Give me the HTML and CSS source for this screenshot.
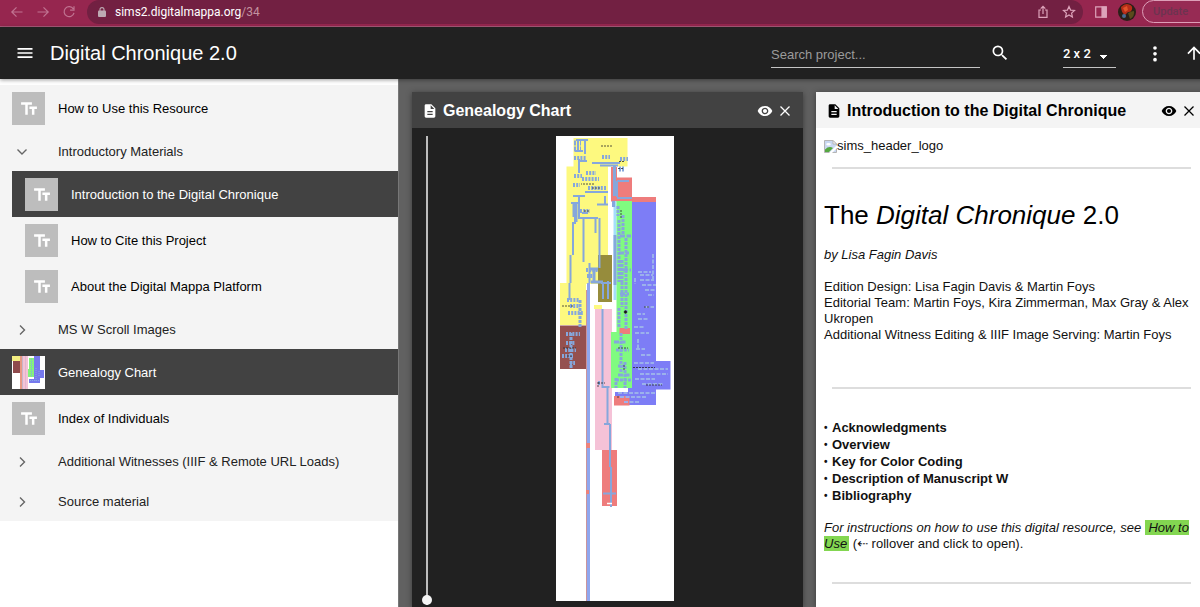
FILE: index.html
```html
<!DOCTYPE html>
<html lang="en">
<head>
<meta charset="utf-8">
<title>Digital Chronique 2.0</title>
<link rel="stylesheet" href="styles.css">
</head>
<body>
<svg class="sprite" aria-hidden="true">
  <symbol id="i-text" viewBox="0 0 24 24"><path d="M2.5 4v3h5v12h3V7h5V4zM21.500 9h-9v3h3v7h3v-7h3z"/></symbol>
  <symbol id="i-doc" viewBox="0 0 24 24"><path d="M14 2H6c-1.100 0-1.990.9-1.990 2L4 20c0 1.100.890 2 1.990 2H18c1.100 0 2-.9 2-2V8zm2 16H8v-2h8v2zm0-4H8v-2h8v2zm-3-5V3.500L18.500 9z"/></symbol>
  <symbol id="i-eye" viewBox="0 0 24 24"><path d="M12 4.500C7 4.500 2.730 7.610 1 12c1.730 4.390 6 7.500 11 7.500s9.270-3.110 11-7.500c-1.730-4.390-6-7.500-11-7.500zM12 17c-2.760 0-5-2.240-5-5s2.240-5 5-5 5 2.240 5 5-2.240 5-5 5zm0-8c-1.660 0-3 1.340-3 3s1.340 3 3 3 3-1.340 3-3-1.340-3-3-3z"/></symbol>
  <symbol id="i-close" viewBox="0 0 16 16"><path d="M3.500 3.500l9 9m0-9l-9 9" fill="none" stroke="currentColor" stroke-width="1.300"/></symbol>
  <symbol id="i-right" viewBox="0 0 16 16"><path d="M6 3.500L10.500 8 6 12.500" fill="none" stroke="currentColor" stroke-width="1.400"/></symbol>
  <symbol id="i-down" viewBox="0 0 16 16"><path d="M3.500 5.500L8 10l4.500-4.500" fill="none" stroke="currentColor" stroke-width="1.400"/></symbol>
</svg>

<div class="browser">
  <nav class="browser-nav" aria-label="Browser">
    <button class="chrome-btn" aria-label="Back"><svg width="14" height="14" viewBox="0 0 14 14"><path d="M12.500 7H2M6.500 2.300L1.800 7l4.700 4.700"/></svg></button>
    <button class="chrome-btn" aria-label="Forward"><svg width="14" height="14" viewBox="0 0 14 14"><path d="M1.500 7H12M7.500 2.300L12.200 7l-4.700 4.700"/></svg></button>
    <button class="chrome-btn" aria-label="Reload"><svg width="14" height="14" viewBox="0 0 14 14"><path d="M11.300 3.900A5 5 0 1 0 12 7.800M12 1.300v3.900H8.100"/></svg></button>
  </nav>
  <div class="address">
    <svg class="lock" width="8" height="10" viewBox="0 0 8 10"><rect y="3.600" width="8" height="6.400" rx="1"/><path d="M2 4V2.600a2 2 0 0 1 4 0V4" fill="none" stroke="currentColor" stroke-width="1.100"/></svg>
    <span class="url">sims2.digitalmappa.org<span class="url-path">/34</span></span>
    <button class="chrome-btn light" aria-label="Share"><svg width="14" height="14" viewBox="0 0 14 14"><path d="M5 5H3v7.300h8V5H9M7 9V1.500M4.700 3.700L7 1.400l2.300 2.300"/></svg></button>
    <button class="chrome-btn light" aria-label="Bookmark"><svg width="14" height="14" viewBox="0 0 14 14"><path d="M7 1.500l1.600 3.600 3.900.4-2.900 2.600.8 3.900L7 10l-3.400 2 .8-3.900-2.900-2.600 3.900-.4z"/></svg></button>
  </div>
  <button class="chrome-btn light" aria-label="Side panel"><svg width="14" height="14" viewBox="0 0 14 14"><path d="M1.700 1.800h10.600v10.400H1.700z"/><path d="M8 2h4v10H8z" fill="currentColor"/></svg></button>
  <svg class="avatar" width="18" height="18" viewBox="0 0 18 18"><circle cx="9" cy="9" r="9" fill="#2a2018"/><path d="M3 4q4-4 8-2.500 4 1 3 5-1 3-4 2.500L7 12Q3 9 3 4z" fill="#b62d18"/><path d="M5 5l4-2 1 4-3 2z" fill="#e0532a"/><path d="M10 10q4-2 6-2 1 5-4 8z" fill="#5a4b1d"/><circle cx="6" cy="13" r="2" fill="#496b91"/></svg>
  <button class="update">Update</button>
</div>

<header class="appbar">
  <button class="icon-btn" aria-label="Menu"><svg width="20" height="20" viewBox="0 0 24 24"><path d="M3 18h18v-2H3zm0-5h18v-2H3zm0-7v2h18V6z"/></svg></button>
  <h1 class="app-title">Digital Chronique 2.0</h1>
  <form class="search">
    <input class="search-input" type="text" placeholder="Search project..." aria-label="Search project">
    <button class="icon-btn" type="button" aria-label="Search"><svg width="20" height="20" viewBox="0 0 24 24"><path d="M15.500 14h-.790l-.280-.270A6.470 6.470 0 0 0 16 9.500 6.500 6.500 0 1 0 9.500 16c1.610 0 3.090-.590 4.230-1.570l.270.280v.790l5 4.990L20.490 19zm-6 0C7.010 14 5 11.990 5 9.500S7.010 5 9.500 5 14 7.010 14 9.500 11.990 14 9.500 14z"/></svg></button>
  </form>
  <select class="layout-select" aria-label="Layout"><option>2 x 2</option></select>
  <button class="icon-btn" aria-label="More"><svg width="20" height="20" viewBox="0 0 24 24"><circle cx="12" cy="6" r="2.200"/><circle cx="12" cy="13" r="2.200"/><circle cx="12" cy="20" r="2.200"/></svg></button>
  <button class="icon-btn up" aria-label="Up"><svg width="20" height="20" viewBox="0 0 24 24"><path d="M4 12l1.410 1.410L11 7.830V20h2V7.830l5.580 5.590L20 12l-8-8z"/></svg></button>
</header>

<div class="layout">
  <nav class="sidebar" aria-label="Contents">
    <ul class="tree">
      <li><a class="row doc" href="#"><span class="thumb"><svg><use href="#i-text"/></svg></span>How to Use this Resource</a></li>
      <li><button class="row group"><svg class="chev"><use href="#i-down"/></svg>Introductory Materials</button>
        <ul class="subtree">
          <li><a class="row doc selected" href="#"><span class="thumb"><svg><use href="#i-text"/></svg></span>Introduction to the Digital Chronique</a></li>
          <li><a class="row doc" href="#"><span class="thumb"><svg><use href="#i-text"/></svg></span>How to Cite this Project</a></li>
          <li><a class="row doc" href="#"><span class="thumb"><svg><use href="#i-text"/></svg></span>About the Digital Mappa Platform</a></li>
        </ul>
      </li>
      <li><button class="row group"><svg class="chev"><use href="#i-right"/></svg>MS W Scroll Images</button></li>
      <li><a class="row doc selected" href="#"><span class="thumb picture"><svg viewBox="0 0 33 33"><path fill="#fff" d="M0 0h33v33H0z"/><path fill="#f4ee82" d="M0 0h8v5H0z"/><path fill="#8f4a4c" d="M1 5h7v12H1z"/><path fill="#e79a85" d="M8 0h2v33H8z"/><path fill="#c8b6cc" d="M10 0h1v33h-1z"/><path fill="#f4c3d6" d="M11 0h5v33h-5z"/><path fill="#e2b5cf" d="M13 0h1v33h-1z"/><path fill="#84f27c" d="M17 2h5v19h-6v-8h1z"/><path fill="#7679ed" d="M22 0h6v14h4v8h-4v5H17v-4h5z"/><path stroke="#88a8e4" stroke-dasharray="1 1" d="M19.500 3v18M24 12v13M27 15v6M18 24.500h9" fill="none"/></svg></span>Genealogy Chart</a></li>
      <li><a class="row doc" href="#"><span class="thumb"><svg><use href="#i-text"/></svg></span>Index of Individuals</a></li>
      <li><button class="row group"><svg class="chev"><use href="#i-right"/></svg>Additional Witnesses (IIIF &amp; Remote URL Loads)</button></li>
      <li><button class="row group"><svg class="chev"><use href="#i-right"/></svg>Source material</button></li>
    </ul>
  </nav>

  <main class="workspace">
    <section class="panel dark">
      <div class="panel-head">
        <svg class="ico"><use href="#i-doc"/></svg>
        <h2 class="panel-title">Genealogy Chart</h2>
        <button class="panel-btn" aria-label="Show highlights"><svg class="ico"><use href="#i-eye"/></svg></button>
        <button class="panel-btn" aria-label="Close"><svg class="ico"><use href="#i-close"/></svg></button>
      </div>
      <div class="viewer">
        <input class="zoom" type="range" min="0" max="100" value="0" aria-label="Zoom">
        <svg class="chart" viewBox="556 136 118 465" role="img" aria-label="Genealogy chart">
          <path fill="#fff" d="M556 136h118v465H556z"/>
          <path fill="#fdf97f" d="M573.500 138h54v28.500H608V255h-10v29h-12v41h-26v-42h6.500V166.500h7zM594 305h8v4h-8z"/>
          <path fill="#968c3c" d="M598 255h14v47h-14z"/>
          <path fill="#95504f" d="M560 325.500h26.500V369H560z"/>
          <path fill="#f5c2d7" d="M595 309h17v141h-17z"/>
          <path fill="#ee7c7c" d="M611 167h6v10.500h15V197h24v5h-24v-.5h-21zM602 450h15v56h-15z"/>
          <path fill="#a5defa" d="M613.500 201h3v99h-3z"/>
          <path fill="#80fb80" d="M616.500 201H632v187h-21v-56h5.500z"/>
          <path fill="#7d7df6" d="M632 202h24v159h14.500v28.500H656V405h-41v-13h13v-4h4z"/>
          <path fill="#ee7c7c" d="M614 396h15.500v9.500H614zM619.500 328h10.500v6h-10.500z"/>
          <path fill="#8fa6ee" d="M587 283h3v318h-3z"/><path fill="#ca949c" d="M586 290h1v311h-1z"/>
          <path fill="#ed827a" d="M586 443h4v5h-4zM586 490h3v4h-3z"/>
          <path fill="#fff" d="M590 284.500h8v6h-8z"/>
          <g fill="none" stroke="#86a7dc">
            <path stroke-width="2" d="M578 140v10M585 139v15M576 140h12M575 151h8M579 159v14M579 161h8M592 163h28M600 165.500h18M585 192h23M573 196h12M571 203h9M605 196v8M597 204.500h11M579 196v22M575 202v22M582 213h6M578 218h20M599.500 218v50M583.500 218v44M595.500 218v15M573 222v33M570.500 255v28M569.500 283v17M589.500 263v20M603 282v17M608 281v18M601 283h10"/>
            <path stroke-width="3" d="M576 202v20M614.500 166v30M613.500 201v6M615 235v50M574 203v14M590 269h8M594 270v12M591 282h12"/>
            <path stroke-width="2" d="M617 198h15M617 181h12M617 181v16M602.500 309v78M607.500 387v38M610 424v26M610 450v17M611 467v40M603 493.500h13M601.500 387h8M599 385v-4M604 424h6"/>
            <path stroke-width="4" stroke-dasharray="2 1.200" d="M582 179h17M586 173h10M574 176h8M588 188h18M574 158h12M602 157h8M620 159h8M573 185h7M580 211h10M586 270h12M587 276h8M567 300h12M570 306h10M568 313h15M566 334h14M566 343h9M565 350h11M562 356h11M570 363h5"/>
            <path stroke-width="3" stroke-dasharray="3 1" d="M580 300v27M571 333v35M618 206v10M623 215v20M619 220v62M626 238v44M622 260v22M626 282v48M622 282v25M619 308v20M621 333v40M616 350h13M618 366h8M625 362v26M616 380h16M616 378v10"/>
            <path stroke-width="3" stroke-dasharray="5 1.500" d="M620 236h11M619 253h10M623 270h8M620 294h9M614 342h12M618 375h12"/>
            <path stroke-width="5" stroke-dasharray="2 1" d="M574 143h7M574 149h7M619 169h6"/>
          </g>
          <g fill="none" stroke="#9bb1ec" stroke-width="2" stroke-dasharray="4 1.500">
            <path d="M653 254v25M638 272h13M635 278v6M640 275h13M640 280h14M642 285h14M645 290h10M648 295h6M645 307h9M637 314h8M638 319h11M634 327h11M635 333h14M638 339v10M636 349h9M641 355h11M634 363h20M638 369h30M640 374h28M635 379h20M642 384h22M618 393h37M620 397h27M624 402h15"/>
          </g>
          <g fill="none" stroke="#29292c">
            <path d="M601 146h12M619 161.500h5M592 188h8M584 211h6M562 306h11M563 348h13M567 356h6M618 168.500h5M618 348h10M633 367.500h22M644 307h5M646 385h16M618 396v3M624 365v5M594 184h-13M598 382v6M598 383h7M621 210v8" stroke-dasharray="2 1" stroke-width=".8"/>
            <circle cx="625.500" cy="312" r="1.300" fill="#111"/>
            <path d="M607 503.500h5" stroke="#fff" stroke-width="1.500"/>
          </g>
        </svg>
      </div>
    </section>

    <section class="panel">
      <div class="panel-head">
        <svg class="ico"><use href="#i-doc"/></svg>
        <h2 class="panel-title">Introduction to the Digital Chronique</h2>
        <button class="panel-btn" aria-label="Show highlights"><svg class="ico"><use href="#i-eye"/></svg></button>
        <button class="panel-btn" aria-label="Close"><svg class="ico"><use href="#i-close"/></svg></button>
      </div>
      <article class="text">
        <p class="logo"><svg width="13" height="13" viewBox="0 0 13 13"><path d="M.5.500h8.500l3.500 3.500v8.500H.5z" fill="#c9d8f2" stroke="#b5b5b5"/><path d="M9 .5V4h3.500z" fill="#fff" stroke="#b5b5b5"/><ellipse cx="4.500" cy="4.300" rx="2.300" ry="1.300" fill="#fff"/><path d="M1 12V9.500Q5 5.500 9 8l-4 4z" fill="#55a841"/><path d="M5 13l8-8v3l-5 5z" fill="#fff"/></svg>sims_header_logo</p>
        <hr class="rule">
        <h3 class="headline">The <em>Digital Chronique</em> 2.0</h3>
        <p class="byline"><em>by Lisa Fagin Davis</em></p>
        <div class="credits">
          <p>Edition Design: Lisa Fagin Davis &amp; Martin Foys</p>
          <p>Editorial Team: Martin Foys, Kira Zimmerman, Max Gray &amp; Alex Ukropen</p>
          <p>Additional Witness Editing &amp; IIIF Image Serving: Martin Foys</p>
        </div>
        <hr class="rule">
        <ul class="topics">
          <li>Acknowledgments</li>
          <li>Overview</li>
          <li>Key for Color Coding</li>
          <li>Description of Manuscript W</li>
          <li>Bibliography</li>
        </ul>
        <p class="note"><em>For instructions on how to use this digital resource, see <a class="mark" href="#">&nbsp;How to Use</a></em> (⇠ rollover and click to open).</p>
        <hr class="rule">
      </article>
    </section>
  </main>
</div>
</body>
</html>
```
FILE: styles.css
```css
* { box-sizing: border-box; }

body {
  margin: 0;
  height: 100vh;
  display: flex;
  flex-direction: column;
  overflow: hidden;
  background: #fff;
  color: #000;
  font: 13px/16px "Liberation Sans", Arial, "DejaVu Sans", sans-serif;
}

h1, h2, h3, p, ul { margin: 0; padding: 0; }
ul { list-style: none; }
a { color: inherit; text-decoration: none; }
button { border: 0; padding: 0; background: none; color: inherit; font: inherit; }
svg { display: block; fill: currentColor; flex: none; }
.sprite { display: none; }

/* browser bar */
.browser {
  display: flex;
  align-items: center;
  flex: none;
  height: 27px;
  padding: 0 0 3px 10px;
  margin-right: -20px;
  background: #96264f;
  border-bottom: 1px solid #ad5c7c;
}
.browser-nav { display: flex; gap: 12px; margin-right: 11px; }
.chrome-btn { color: #c07391; }
.chrome-btn.light { color: #dda3ba; }
.chrome-btn svg { fill: none; stroke: currentColor; stroke-width: 1.2; }
.address {
  flex: 1;
  display: flex;
  align-items: center;
  gap: 12px;
  height: 24px;
  padding: 0 7px 0 11px;
  margin-right: 11px;
  border-radius: 12px;
  background: #722042;
}
.lock { color: #bdaab3; margin-right: -3px; }
.url { flex: 1; color: #fff; font: 400 12px/16px Roboto, sans-serif; }
.url-path { color: #c3929f; }
.avatar { margin: 0 6px 0 10px; }
.update {
  width: 78px;
  height: 23px;
  padding-left: 10px;
  border: 1px solid #dd9fb8;
  border-radius: 12px;
  background: #972b54;
  color: #6c3450;
  font: 500 11px/16px Roboto, sans-serif;
  text-align: left;
}

/* application bar */
.appbar {
  position: relative;
  z-index: 2;
  display: flex;
  align-items: center;
  flex: none;
  height: 52px;
  margin-right: -4px;
  padding-left: 15px;
  background: #212121;
  box-shadow: 0 1px 4px rgba(0, 0, 0, .4);
  color: #fff;
}
.app-title { flex: 1; margin-left: 15px; font-size: 20px; font-weight: 400; line-height: 24px; }
.search { display: flex; align-items: center; gap: 10px; margin-right: 53px; }
.search-input {
  width: 209px;
  height: 28px;
  margin-top: 2px;
  padding: 2px 0 0;
  border: 0;
  border-bottom: 1px solid #c4c4c4;
  background: none;
  color: #fff;
  font: inherit;
}
.search-input::placeholder { color: #9b9b9b; opacity: 1; }
.layout-select {
  appearance: none;
  width: 53px;
  height: 28px;
  margin: 2px 29px 0 0;
  padding: 0;
  border: 0;
  border-bottom: 1px solid #c4c4c4;
  border-radius: 0;
  background: conic-gradient(from 315deg at 50% 100%, #fff 90deg, transparent 0) 36px 15px / 8px 4px no-repeat;
  color: #fff;
  font: 500 13px/24px Roboto, sans-serif;
}
.up { margin-left: 19px; }

/* page layout */
.layout { display: grid; grid-template-columns: 399px 1fr; flex: 1; min-height: 0; }

.sidebar { padding-top: 6px; background: #fff; border-right: 1px solid #777; }
.tree { background: #f4f4f4; }
.subtree { padding-left: 12px; }
.subtree .row { padding-left: 13px; }
.row { display: flex; align-items: center; width: 100%; padding: 1px 0 0 12px; text-align: left; }
.doc { height: 46px; gap: 13px; }
.group { height: 40px; gap: 28px; padding: 2px 0 0 14px; color: #222; }
.selected { background: #424242; color: #fff; }
.thumb {
  display: grid;
  place-items: center;
  width: 33px;
  height: 33px;
  background: #bdbdbd;
  color: #fff;
}
.thumb svg { width: 20px; height: 20px; }
.thumb.picture svg { width: 33px; height: 33px; }
.chev { width: 16px; height: 16px; color: #666; }

.workspace {
  display: grid;
  grid-template-columns: 1fr 1fr;
  gap: 13px;
  min-width: 0;
  margin-right: -7px;
  padding: 13px 0 0 13px;
  background: #616161;
}
.panel { display: flex; flex-direction: column; min-width: 0; background: #fff; box-shadow: 0 1px 6px rgba(0, 0, 0, .4); }
.panel.dark { background: #212121; color: #fff; }
.panel-head {
  display: flex;
  align-items: center;
  flex: none;
  height: 36px;
  padding: 1px 10px 0;
  background: #f4f4f4;
}
.dark .panel-head { background: #424242; }
.panel-title { flex: 1; margin-left: 5px; font-size: 16px; line-height: 20px; white-space: nowrap; }
.panel-btn { margin-left: 4px; }
.ico { width: 16px; height: 16px; }

/* chart viewer */
.viewer { display: grid; grid-template-columns: 12px 1fr; padding: 8px 6px 0 9px; }
.zoom {
  appearance: none;
  writing-mode: vertical-lr;
  direction: rtl;
  width: 12px;
  height: 469px;
  margin: 0;
  background: linear-gradient(#bdbdbd, #bdbdbd) center / 2px 100% no-repeat;
}
.zoom::-webkit-slider-thumb {
  appearance: none;
  width: 10px;
  height: 10px;
  border-radius: 50%;
  background: #f5f5f5;
}
.chart { width: 118px; height: 465px; margin: 0 auto; }

/* document text */
.text { padding: 9px 8px 0; color: #111; }
.logo { display: flex; align-items: center; height: 18px; }
.rule { height: 2px; margin: 12px 8px 0; border: 0; background: #ddd; }
.headline { margin-top: 30px; font-size: 26px; font-weight: 400; line-height: 32px; color: #000; }
.byline { margin-top: 16px; }
.credits { margin: 16px 0 44px; }
.topics { margin: 30px 0 16px; font-weight: 700; }
.topics li { display: flex; gap: 3px; line-height: 17px; }
.topics li::before { content: "•"; width: 5px; font-size: 10px; }
.note { margin-bottom: 30px; }
.mark { background: #83d651; padding: 0 2px 0 0; }
```
